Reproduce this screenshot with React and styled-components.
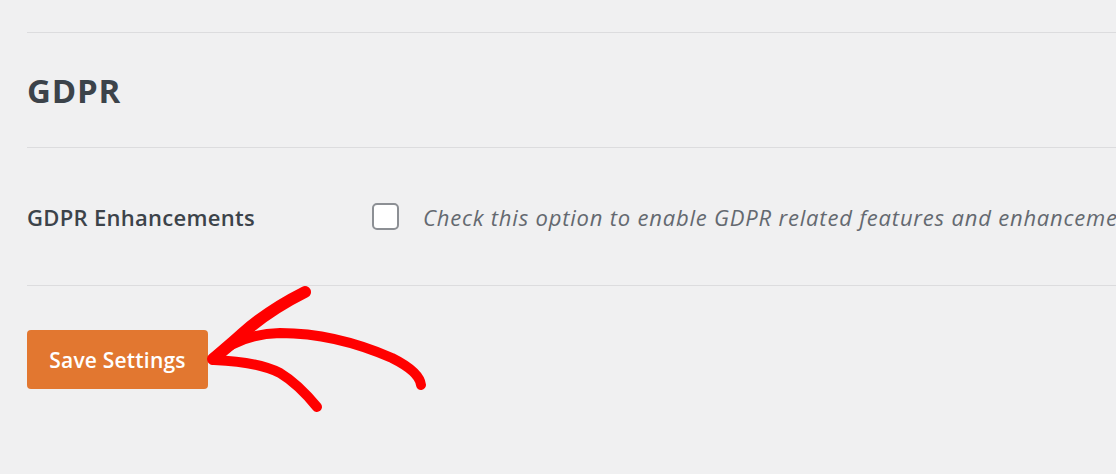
import styled, { createGlobalStyle } from 'styled-components';

const GlobalStyle = createGlobalStyle`
  html, body {
    margin: 0;
    padding: 0;
    background: #f0f0f1;
    overflow: hidden;
  }
  body {
    font-family: 'Open Sans', 'Noto Sans', sans-serif;
  }
`;

const Page = styled.div`
  position: relative;
  width: 1116px;
  height: 474px;
  padding: 32px 0 0 27px;
  box-sizing: border-box;
  overflow: hidden;
`;

const Divider = styled.div`
  height: 1px;
  background: #dcdcde;
`;

const SectionHead = styled.div`
  height: 114px;
  display: flex;
  align-items: center;
`;

const Title = styled.h2`
  margin: 0;
  font-size: 33px;
  font-weight: 700;
  color: #3c434a;
  letter-spacing: 0.8px;
`;

const Row = styled.div`
  height: 137px;
  display: flex;
  align-items: center;
  white-space: nowrap;
  overflow: hidden;
`;

const Label = styled.label`
  width: 345px;
  flex-shrink: 0;
  font-size: 22px;
  font-weight: 600;
  letter-spacing: 0.3px;
  color: #3c434a;
`;

const Checkbox = styled.span`
  width: 23px;
  height: 23px;
  flex-shrink: 0;
  border: 2px solid #8c8f94;
  border-radius: 5px;
  background: #fff;
  margin-right: 24px;
`;

const Description = styled.span`
  font-size: 22px;
  font-style: italic;
  letter-spacing: 0.8px;
  color: #646970;
`;

const Footer = styled.div`
  padding-top: 44px;
`;

const SaveButton = styled.button`
  width: 181px;
  height: 59px;
  border: none;
  border-radius: 4px;
  background: #e27730;
  color: #fff;
  font-family: inherit;
  font-size: 21px;
  font-weight: 600;
  letter-spacing: 0.2px;
  cursor: pointer;
`;

const Arrow = styled.svg`
  position: absolute;
  left: 0;
  top: 0;
  pointer-events: none;
`;

export default function App() {
  return (
    <>
      <GlobalStyle />
      <Page>
        <Divider />
        <SectionHead>
          <Title>GDPR</Title>
        </SectionHead>
        <Divider />
        <Row>
          <Label>GDPR Enhancements</Label>
          <Checkbox />
          <Description>
            Check this option to enable GDPR related features and enhancements.
          </Description>
        </Row>
        <Divider />
        <Footer>
          <SaveButton>Save Settings</SaveButton>
        </Footer>
        <Arrow width="1116" height="474" viewBox="0 0 1116 474">
          <g fill="none" stroke="#ff0000" strokeLinecap="round" strokeLinejoin="round">
            <path d="M305 292 C285 302 262 316 242 334 C230 345 220 353 213 359" strokeWidth="12" />
            <path d="M214 358 C228 344 250 334 280 333 C320 333 360 344 392 358 C410 367 420 376 421 385" strokeWidth="10" />
            <path d="M214 360 C240 361 262 364 280 373 C295 382 308 396 317 407" strokeWidth="10" />
          </g>
        </Arrow>
      </Page>
    </>
  );
}
